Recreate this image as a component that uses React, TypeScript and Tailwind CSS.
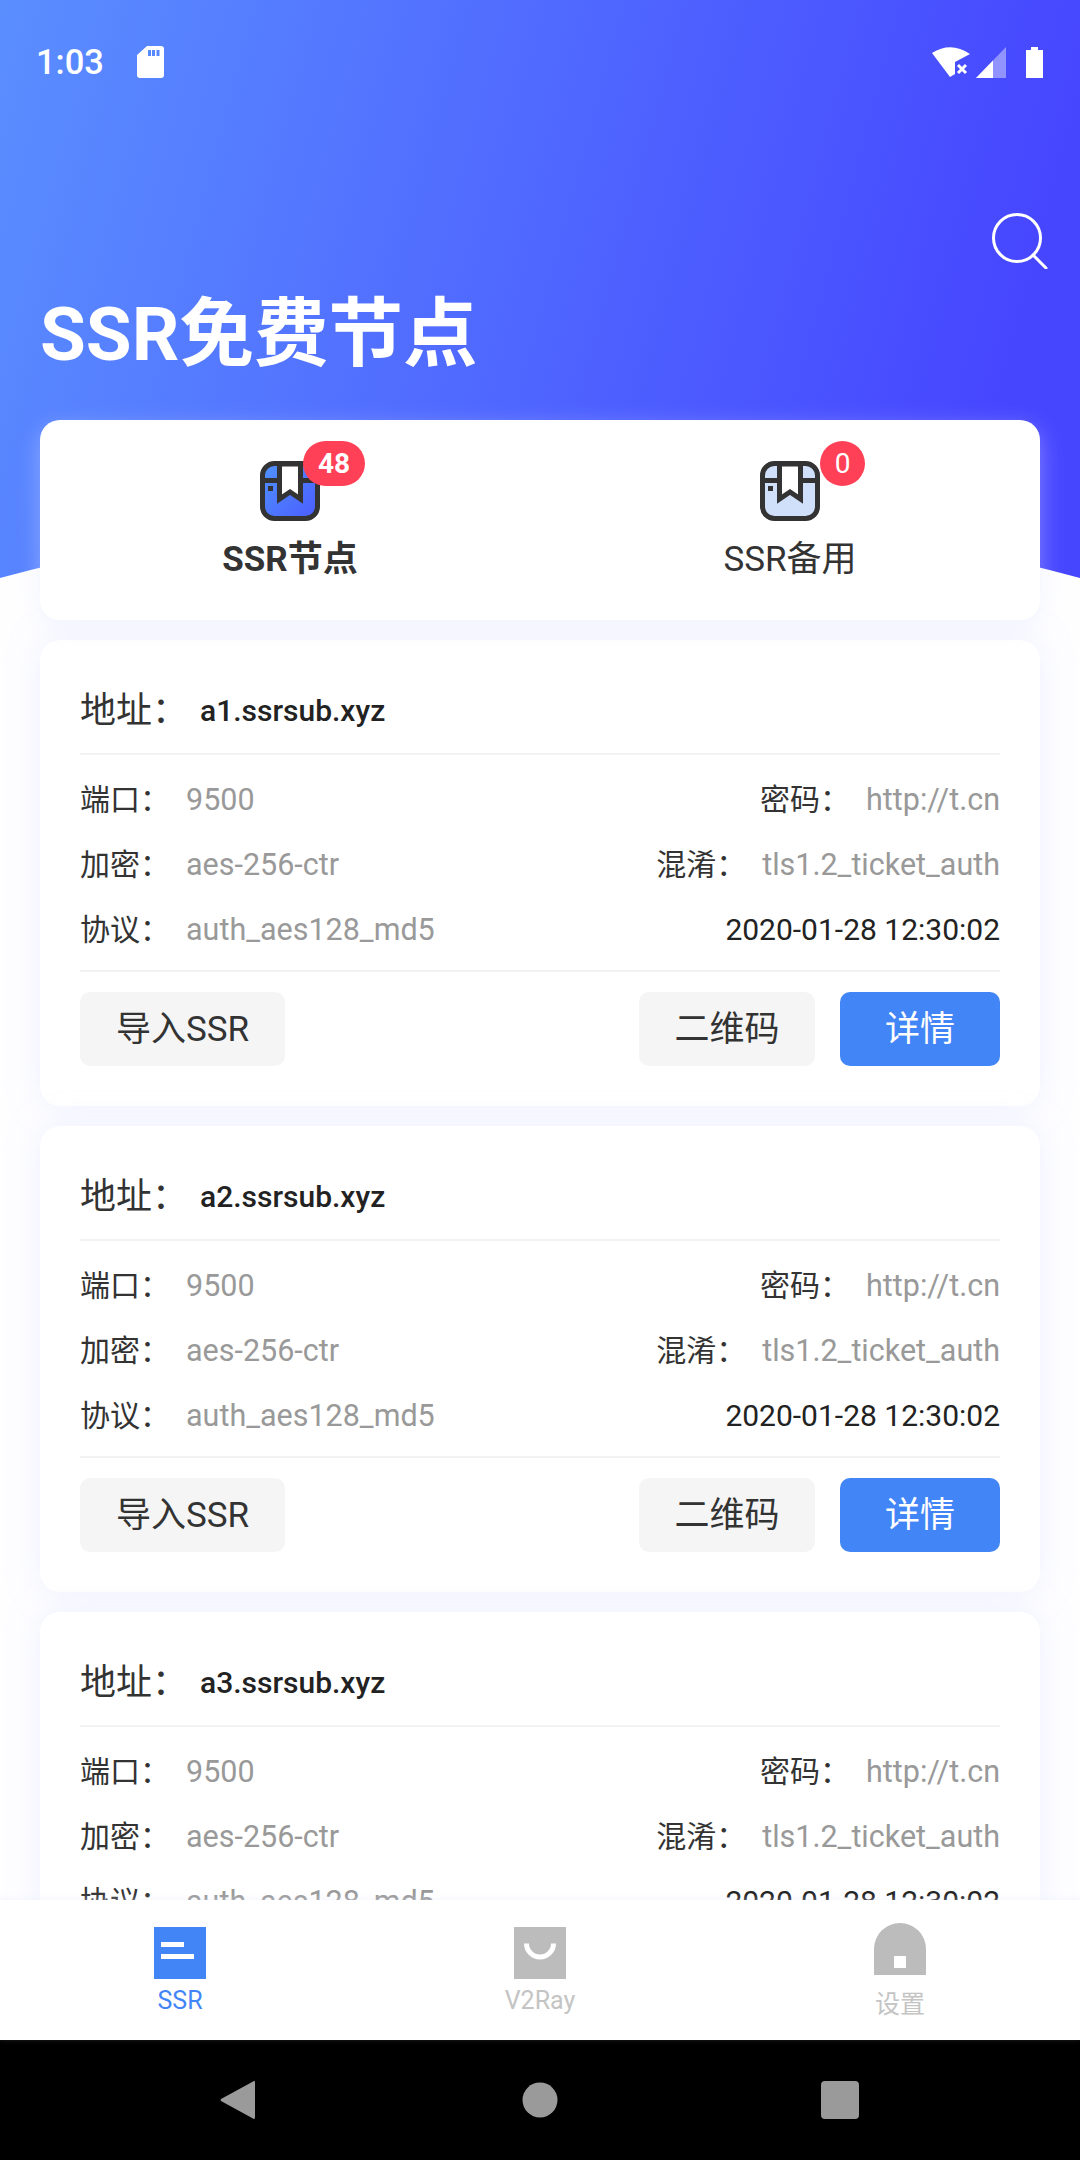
const font = { fontFamily: 'Roboto, "Noto Sans CJK SC", sans-serif' };

function TabIcon({ id, fill }: { id: string; fill?: boolean }) {
  return (
    <svg width="60" height="60" viewBox="0 0 60 60">
      <defs>
        <linearGradient id={id} x1="0" y1="0" x2="1" y2="1">
          <stop offset="0" stopColor="#4f93ff" />
          <stop offset="1" stopColor="#4b5cff" />
        </linearGradient>
      </defs>
      <rect x="2.5" y="2.5" width="55" height="55" rx="12" fill={fill ? `url(#${id})` : "#d0e0fa"} stroke="#333" strokeWidth="5" />
      <path d="M3 19.5H57" stroke="#333" strokeWidth="5" />
      <path d="M19.5 3V38L30 31L40.5 38V3Z" fill="#fff" stroke="#333" strokeWidth="5" />
      <rect x="8" y="25" width="5" height="5" fill="#333" />
    </svg>
  );
}

function StatusBar() {
  return (
    <div className="flex h-[92px] items-center pl-[36px] pr-[37px] pt-[32px] text-white">
      <span className="text-[34.5px] font-medium leading-[60px]">1:03</span>
      <svg className="ml-[33px]" width="27" height="32" viewBox="0 0 27 32">
        <path d="M10 0H24Q27 0 27 3V29Q27 32 24 32H3Q0 32 0 29V9Z" fill="#fff" />
        <path d="M11 4h3v6h-3zM15 4h3v6h-3zM19.500 4h3v6h-3z" fill="#5688ff" />
      </svg>
      <div className="ml-auto flex items-start gap-[6px]">
        <svg width="38" height="30" viewBox="0 0 38 30">
          <path d="M0 6Q19 -6 38 7L23 15V27L18 30Z" fill="#fff" />
          <path d="M26 18L34 26M34 18L26 26" stroke="#fff" strokeWidth="3" />
        </svg>
        <svg width="30" height="31" viewBox="0 0 30 31">
          <path d="M0 31L30 0V31Z" fill="#fff" fillOpacity=".4" />
          <path d="M0 31L17 13.500V31Z" fill="#fff" />
        </svg>
        <svg className="ml-[14px]" width="17" height="31" viewBox="0 0 17 31">
          <path d="M5 0H12V3H17V31H0V3H5Z" fill="#fff" />
        </svg>
      </div>
    </div>
  );
}

function Hero() {
  return (
    <div className="relative h-[580px] bg-[linear-gradient(105deg,#5a8eff_0%,#4646ff_90%)]">
      <StatusBar />
      <div className="flex justify-end pr-[32px] pt-[121px]">
        <svg width="56" height="56" viewBox="0 0 56 56" fill="none" stroke="#fff" strokeWidth="3">
          <circle cx="25" cy="25" r="23.500" />
          <path d="M41 42L54 55" strokeLinecap="round" />
        </svg>
      </div>
      <h1 className="mt-[16px] pl-[40px] text-[74.5px] font-bold leading-[100px] text-white">SSR免费节点</h1>
      <svg className="absolute bottom-0 left-0" width="1080" height="80" viewBox="0 0 1080 80">
        <path d="M0 78Q540 -68 1080 78V80H0Z" fill="#fefeff" />
      </svg>
    </div>
  );
}

function Tab({ label, count, active, id }: { label: string; count: string; active?: boolean; id: string }) {
  return (
    <div className="flex flex-col items-center pt-[41px]">
      <div className="relative h-[60px] w-[60px]">
        <TabIcon id={id} fill={active} />
        <span className={`absolute top-[-20px] flex h-[45px] items-center justify-center rounded-full bg-[#ff4056] text-[28px] text-white ${active ? "left-[43px] w-[62px] font-bold" : "left-[60px] w-[45px]"}`}>
          {count}
        </span>
      </div>
      <span className={`mt-[14px] text-[35px] leading-[50px] text-[#333] ${active ? "font-bold" : ""}`}>{label}</span>
    </div>
  );
}

function Tabs() {
  return (
    <div className="relative mx-[40px] -mt-[160px] grid h-[200px] grid-cols-2 rounded-[20px] bg-white shadow-[0_8px_24px_rgba(225,230,255,0.4)]">
      <Tab label="SSR节点" count="48" active id="g1" />
      <Tab label="SSR备用" count="0" id="g2" />
    </div>
  );
}

function Field({ label, value }: { label: string; value: string }) {
  return (
    <div className="flex items-center">
      <span className="w-[106px] text-[30px] text-[#333]">{label}：</span>
      <span className="text-[30.5px] text-[#999]">{value}</span>
    </div>
  );
}

function Button({ children, primary, className }: { children: string; primary?: boolean; className: string }) {
  return (
    <div className={`flex h-[74px] items-center justify-center rounded-[10px] pt-[3px] text-[35px] ${primary ? "bg-[#4285f6] text-white" : "bg-[#f5f5f5] text-[#333]"} ${className}`}>
      {children}
    </div>
  );
}

function Card({ host }: { host: string }) {
  return (
    <div className="mt-[20px] h-[466px] shrink-0 rounded-[20px] bg-white px-[40px] pt-[41px] shadow-[0_0_30px_rgba(225,230,255,0.5)]">
      <div className="flex h-[72px] items-start">
        <span className="w-[120px] text-[36px] leading-[60px] text-[#333]">地址：</span>
        <span className="text-[30px] font-medium leading-[60px] text-[#222]">{host}</span>
      </div>
      <div className="h-[2px] bg-[#f2f2f2]" />
      <div className="pt-[12px]">
        <div className="flex h-[65px] items-center justify-between">
          <Field label="端口" value="9500" />
          <Field label="密码" value="http://t.cn" />
        </div>
        <div className="flex h-[65px] items-center justify-between">
          <Field label="加密" value="aes-256-ctr" />
          <Field label="混淆" value="tls1.2_ticket_auth" />
        </div>
        <div className="flex h-[65px] items-center justify-between">
          <Field label="协议" value="auth_aes128_md5" />
          <span className="text-[30px] text-[#222]">2020-01-28 12:30:02</span>
        </div>
      </div>
      <div className="mt-[8px] h-[2px] bg-[#f2f2f2]" />
      <div className="mt-[20px] flex">
        <Button className="w-[205px]">导入SSR</Button>
        <Button className="ml-auto w-[176px]">二维码</Button>
        <Button primary className="ml-[25px] w-[160px]">详情</Button>
      </div>
    </div>
  );
}

function NavItem({ label, color, icon, labelClass }: { label: string; color: string; icon: React.ReactNode; labelClass: string }) {
  return (
    <div className="flex flex-col items-center">
      {icon}
      <span className={`text-[25px] leading-[36px] ${color} ${labelClass}`}>{label}</span>
    </div>
  );
}

function BottomNav() {
  return (
    <div className="relative grid h-[140px] shrink-0 grid-cols-3 bg-white shadow-[0_-2px_6px_rgba(225,230,255,0.3)]">
      <NavItem
        label="SSR"
        color="text-[#4285f6]"
        labelClass="mt-[4px]"
        icon={
          <svg className="mt-[27px]" width="52" height="52" viewBox="0 0 52 52">
            <rect width="52" height="52" fill="#4285f6" />
            <rect x="7" y="15" width="23" height="5" fill="#fff" />
            <rect x="7" y="27" width="33" height="5" fill="#fff" />
          </svg>
        }
      />
      <NavItem
        label="V2Ray"
        color="text-[#c4c4c4]"
        labelClass="mt-[4px]"
        icon={
          <svg className="mt-[27px]" width="52" height="52" viewBox="0 0 52 52">
            <rect width="52" height="52" fill="#bcbcbc" />
            <path d="M12.500 16.500A13.500 13.500 0 0 0 39.500 16.500" fill="none" stroke="#fff" strokeWidth="5" />
          </svg>
        }
      />
      <NavItem
        label="设置"
        color="text-[#c4c4c4]"
        labelClass="mt-[12px]"
        icon={
          <svg className="mt-[23px]" width="52" height="52" viewBox="0 0 52 52">
            <path d="M0 52V26A26 26 0 0 1 52 26V52Z" fill="#bcbcbc" />
            <rect x="20" y="33" width="12" height="12" fill="#fff" />
          </svg>
        }
      />
    </div>
  );
}

function SystemNav() {
  return (
    <div className="flex h-[120px] shrink-0 items-center justify-center bg-black">
      <svg width="640" height="40" viewBox="0 0 640 40" fill="#9a9a9a">
        <path d="M34 1Q35 0 35 3V37Q35 40 33 38.500L1 21Q0 20 1 19Z" />
        <circle cx="320" cy="20" r="17.500" />
        <rect x="601" y="1" width="38" height="38" rx="4" />
      </svg>
    </div>
  );
}

export default function App() {
  return (
    <div className="flex h-[2160px] w-[1080px] flex-col overflow-hidden bg-[#fefeff]" style={font}>
      <div className="min-h-0 flex-1 overflow-hidden">
        <Hero />
        <Tabs />
        <div className="flex flex-col px-[40px]">
          <Card host="a1.ssrsub.xyz" />
          <Card host="a2.ssrsub.xyz" />
          <Card host="a3.ssrsub.xyz" />
        </div>
      </div>
      <BottomNav />
      <SystemNav />
    </div>
  );
}
